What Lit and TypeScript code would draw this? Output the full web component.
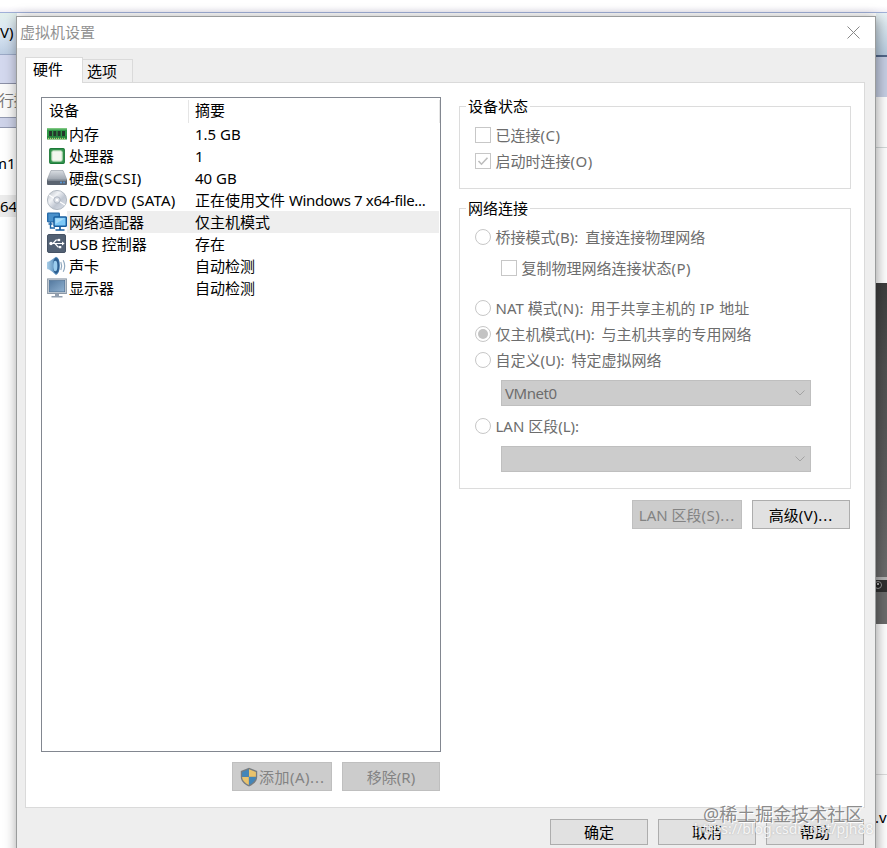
import { LitElement, html, css, svg, nothing } from "lit";
import { customElement, property } from "lit/decorators.js";
import { classMap } from "lit/directives/class-map.js";

const icons: Record<string, unknown> = {
  memory: svg`<rect x="0" y="4" width="20" height="11.5" fill="#2f9a48"/><rect x="0" y="4" width="20" height="1.5" fill="#7cc67f"/>
    <path d="M2 7h3v5H2zM6.3 7h3v5h-3zM10.6 7h3v5h-3zM15 7h3v5h-3z" fill="#24382b"/>
    <path d="M1 14.5h18" stroke="#b9c77a" stroke-width="2" stroke-dasharray="1 1"/><path d="M0 13h20" stroke="#1d7134"/>`,
  cpu: svg`<rect x="2.7" y="2.7" width="14.6" height="14.6" rx="1" fill="#3a9a54" stroke="#1d7a38" stroke-width="1.2"/>
    <rect x="4.8" y="4.8" width="10.4" height="10.4" rx="1.5" fill="#f3f7f0" stroke="#b6d8b5"/>`,
  disk: svg`<defs><linearGradient id="d" x2="0" y2="1"><stop stop-color="#d9dde2"/><stop offset="1" stop-color="#9ba2ac"/></linearGradient></defs>
    <path d="M4 2.500h12l4 9.500H0z" fill="url(#d)" stroke="#9299a3" stroke-width=".6"/><rect x="0" y="11.5" width="20" height="5.500" rx="1" fill="#5b6470"/>
    <path d="M1 12h18" stroke="#a5acb5"/><circle cx="14" cy="14.5" r=".9" fill="#5ba6ee"/><circle cx="17" cy="14.5" r=".9" fill="#4e91d4"/>`,
  disc: svg`<defs><linearGradient id="c" x2="1" y2="1"><stop stop-color="#aeb5be"/><stop offset=".35" stop-color="#f1f3f6"/><stop offset=".6" stop-color="#c0c7d2"/><stop offset="1" stop-color="#dfe4ec"/></linearGradient></defs>
    <circle cx="10" cy="10" r="9.6" fill="url(#c)" stroke="#a5adb8" stroke-width=".8"/><path d="M10 10 2 5M10 10l8 5" stroke="#fff" stroke-width="1.3"/>
    <circle cx="10" cy="10" r="3.2" fill="#dde1e8" stroke="#9ba4b2" stroke-width=".7"/><circle cx="10" cy="10" r="1.3" fill="#fff"/>`,
  network: svg`<rect x=".7" y="1.2" width="11.6" height="8.6" rx=".5" fill="#4a91cb" stroke="#1f66a6" stroke-width="1.3"/><path d="M3.5 10v6H8M1.5 12h4" fill="none" stroke="#1f66a6" stroke-width="1.4"/>
    <rect x="7" y="5" width="12.3" height="9.3" rx=".8" fill="#7cc8f7" stroke="#185d9e" stroke-width="1.5"/><path d="M8.5 6.5h9L8.5 12z" fill="#a9ddfb"/><path d="M13 14.5v3M8.5 18h9" stroke="#185d9e" stroke-width="1.7"/>`,
  usb: svg`<rect x=".5" y=".5" width="18" height="18" rx="1.5" fill="#526174" stroke="#465365"/><path d="M3.5 9.5H16M6 9.5l3-3.5h2.5M8 9.5l3 3.5h2" fill="none" stroke="#fff" stroke-width="1.2"/>
    <circle cx="4" cy="9.5" r="1.7" fill="#fff"/><circle cx="12" cy="6" r="1.3" fill="#fff"/><path d="m15 7.500 2.600 2-2.600 2zM12 11.9h2.300v2.300H12z" fill="#fff"/>`,
  sound: svg`<defs><linearGradient id="s" x2="1"><stop stop-color="#a9cfe9"/><stop offset="1" stop-color="#2f6ca4"/></linearGradient></defs>
    <path d="M0 6.5Q0 5.5 2 5.5 6 3 9 .8 12.8 2 12.8 9.5T9 19Q6 16 2 13.5 0 13.500 0 12.500z" fill="url(#s)"/><ellipse cx="9" cy="9.8" rx="3" ry="7.8" fill="#2c5c8d"/><ellipse cx="8.300" cy="10" rx="2.100" ry="5.300" fill="#9bcdee"/>
    <path d="M13.8 6q1.7 4 0 8M16.2 4.2q3 5.800 0 11.600" fill="none" stroke="#91a9bf" stroke-width="1.2"/>`,
  display: svg`<defs><linearGradient id="m" x2="1" y2="1"><stop stop-color="#54799f"/><stop offset="1" stop-color="#91b2d1"/></linearGradient></defs>
    <rect x=".6" y=".9" width="18.8" height="14.600" fill="#cbd2da" stroke="#8d99a7"/><rect x="2.300" y="2.600" width="15.400" height="11.200" fill="url(#m)" stroke="#4e7195" stroke-width=".7"/><path d="M8 16h4v2H8zM4.500 18h11v1.500h-11z" fill="#929faf"/>`,
  shield: svg`<path d="M10 .8 18.200 4v6c0 4-3.500 7.500-8.200 9.500C5.300 17.500 1.800 14 1.800 10V4z" fill="#777c80"/><path d="M9.800 2.300v7.500H3.100V4.900z" fill="#4386b9"/><path d="M10 2.300v7.500h6.900V4.900z" fill="#e9c36d"/>
    <path d="M3.100 10h6.700v8C6 16 3.300 13.500 3.100 10z" fill="#e9c36d"/><path d="M10 10h6.900c-.3 3.500-3 6-6.900 8z" fill="#4386b9"/>`,
};

const devices: [string, unknown, unknown][] = [
  ["memory", "内存", "1.5 GB"],
  ["cpu", "处理器", "1"],
  ["disk", html`硬盘<span class="wide">(SCSI)</span>`, "40 GB"],
  ["disc", html`<span class="wider">CD/DVD (SATA)</span>`, html`正在使用文件 <span class="tight">Windows 7 x64-file...</span>`],
  ["network", "网络适配器", "仅主机模式"],
  ["usb", "USB 控制器", "存在"],
  ["sound", "声卡", "自动检测"],
  ["display", "显示器", "自动检测"],
];

@customElement("vm-icon")
class VmIcon extends LitElement {
  @property() name = "";
  static styles = css`:host { display: block; width: 20px; height: 20px; flex: none; } svg { display: block; }`;
  render() {
    return html`<svg width="20" height="20" viewBox="0 0 20 20">${icons[this.name]}</svg>`;
  }
}

@customElement("vm-choice")
class VmChoice extends LitElement {
  @property() kind = "radio";
  @property({ type: Boolean }) checked = false;
  static styles = css`
    :host { display: flex; align-items: center; height: 26px; color: #6d6d6d; white-space: pre; }
    .mark { box-sizing: border-box; width: 16px; height: 16px; border: 1px solid #c7c7c7; background: #fff; margin-right: 4.5px; flex: none; display: flex; align-items: center; justify-content: center; }
    .radio { border-radius: 50%; }
    .dot { width: 10px; height: 10px; border-radius: 50%; background: #c3c3c3; }
    svg { display: block; }
  `;
  render() {
    const radio = this.kind === "radio";
    return html`<span class=${classMap({ mark: true, radio })}>
      ${!this.checked ? nothing : radio ? html`<span class="dot"></span>`
        : html`<svg width="14" height="14" viewBox="0 0 14 14"><path d="m2.500 7 3 3.200 6-6.500" fill="none" stroke="#bdbdbd" stroke-width="1.600"/></svg>`}</span><slot></slot>`;
  }
}

@customElement("vm-select")
class VmSelect extends LitElement {
  static styles = css`
    :host { box-sizing: border-box; display: flex; align-items: center; width: 310px; height: 26px; background: #ccc; border: 1px solid #bfbfbf; color: #6d6d6d; padding: 0 4px 0 3px; letter-spacing: -.45px; }
    svg { margin-left: auto; }
  `;
  render() {
    return html`<slot></slot><svg width="12" height="8" viewBox="0 0 12 8"><path d="m1.500 1.500 4.500 4.500 4.500-4.500" fill="none" stroke="#a3a3a3"/></svg>`;
  }
}

@customElement("vm-button")
class VmButton extends LitElement {
  static styles = css`
    :host { box-sizing: border-box; display: flex; align-items: center; justify-content: center; height: 29px; background: #e1e1e1; border: 1px solid #adadad; color: #000; white-space: pre; }
    :host([disabled]) { background: #ccc; border-color: #bfbfbf; color: #838383; }
  `;
  render() {
    return html`<slot></slot>`;
  }
}

@customElement("app-root")
class AppRoot extends LitElement {
  static styles = css`
    * { box-sizing: border-box; }
    :host { display: block; position: relative; width: 887px; height: 848px; overflow: hidden; background: #fff; color: #000;
      font: 15px/22px "Noto Sans", "Noto Sans CJK SC", sans-serif; }
    .desktop { display: flex; flex-direction: column; height: 848px; overflow: hidden; white-space: nowrap; }
    .sky { height: 13px; border-bottom: 1px solid #a0b0d8; background: linear-gradient(#fff 50%, #f3f1f8); }
    .behind { display: flex; justify-content: space-between; flex: 1; }
    .edge { display: flex; flex-direction: column; width: 17px; overflow: hidden; }
    .edge.right { width: 11px; }
    .menu { height: 42px; padding-top: 8px; background: linear-gradient(#e1efec, #dce8f4 45%, #bdcee3); border-bottom: 1px solid #9ba9c6; }
    .lav { height: 29px; background: #d3d8ee; border-bottom: 1px solid #8b90a6; }
    .search { height: 33px; padding-top: 5px; color: #777; background: #fafafa; text-indent: -1px; letter-spacing: -.5px; }
    .strip { height: 11px; background: #ced3e9; border: solid #9299b0; border-width: 1px 0; }
    .item { height: 22px; }
    .first { margin: 24px 0 21px; text-indent: -7px; }
    .sel { background: #ececec; }
    .rmenu { height: 44px; background: linear-gradient(#e8f2f5, #b5cade); border-bottom: 2px solid #526789; }
    .rlav { height: 40px; background: #c5cee3; }
    .rule { height: 51px; border-bottom: 1px solid #d4dada; }
    .photo { margin-top: 135px; height: 341px; background: linear-gradient(#3e3e3e, #505050 25%, #5d5d5d 60%, #6b6b6b 85%); padding-top: 294px; }
    .bar { height: 15px; border-top: 3px solid #b3b3b3; background: #303030; }
    .bar svg { display: block; margin-top: 1px; }
    .file { margin-top: 150px; border-top: 1px solid #ddd; padding-top: 31px; text-indent: -1px; }

    .dialog { position: absolute; left: 16px; top: 16px; width: 860px; height: 850px; border: 1px solid #9a9c9c; background: #eee; box-shadow: 1px 2px 12px rgba(0,0,0,.4); }
    .title { display: flex; justify-content: space-between; align-items: center; height: 31px; padding: 0 15px 0 3px; background: #fff; color: #929292; }
    .title span { margin-top: -2px; }
    .tabs { display: flex; align-items: flex-end; height: 34px; padding-left: 8px; }
    .tab { height: 23px; width: 50px; border: 1px solid #dadada; border-left: 0; border-bottom: 0; padding: 0 0 0 4px; background: #f0f0f0; }
    .tab.on { height: 26px; width: 58px; margin-bottom: -1px; border-left: 1px solid #dadada; padding: 0 0 0 7px; background: #fff; position: relative; z-index: 1; }
    .panel { margin-left: 8px; width: 840px; height: 726px; border: 1px solid #dadada; background: #fff; display: grid; grid-template-columns: 400px 392px; column-gap: 18px; padding: 14px 0 0 15px; }
    .list { height: 655px; border: 1px solid #828790; }
    .head, .row { display: grid; grid-template-columns: 147px 1fr; white-space: nowrap; }
    .head { height: 25px; padding-top: 2px; }
    .head span { height: 23px; line-height: 21px; }
    .head .h1 { padding-left: 7px; border-right: 1px solid #e5e5e5; }
    .head .h2 { padding-left: 6px; border-right: 1px solid #e5e5e5; }
    .row { height: 22px; padding-right: 1px; }
    .dev { display: flex; align-items: center; padding-left: 5px; }
    .name { flex: 1; height: 22px; padding-left: 2px; }
    .sum { padding-left: 6px; overflow: hidden; }
    .wide { letter-spacing: .45px; } .wider { letter-spacing: .25px; } .tight { letter-spacing: -.35px; }
    .dots { letter-spacing: 1px; }
    .colon { margin-right: 3px; }
    .active .name, .active .sum { background: #eee; }
    .actions { display: flex; justify-content: flex-end; gap: 10px; margin: 10px 1px 0 0; }
    .w98 { width: 98px; } .w100 { width: 100px; } .w110 { width: 110px; }
    fieldset { margin: 0; min-width: 0; border: 1px solid #dcdcdc; padding: 0 0 0 15px; }
    legend { margin-left: -9px; padding: 0 2px; height: 20px; line-height: 20px; }
    .status { height: 93px; padding-top: 6px; }
    .net { height: 291px; margin-top: 9px; padding-top: 6px; }
    .nest { margin-left: 26px; }
    .g5 { margin-top: 5px; } .g14 { margin-top: 14px; } .g7 { margin-top: 7px; }
    .rightcol { padding-top: 1px; margin-top: -2px; }
    .rightcol .actions { margin-top: 11px; }
    .foot { display: flex; justify-content: flex-end; gap: 10px; padding: 11px 11px 0 0; }
    .foot vm-button { height: 26px; }
    .mark { position: absolute; color: rgba(110,110,110,.8); font-size: 18px; line-height: 24px; white-space: nowrap; }
    .m1 { left: 703px; top: 802px; text-shadow: 1px 1px #fff; }
    .m2 { left: 694px; top: 817px; font-size: 14px; color: rgba(255,255,255,.85); text-shadow: 0 0 2px rgba(120,120,120,.45); }
  `;

  render() {
    const dots = html`<span class="dots">...</span>`;
    const colon = html`<span class="colon">:</span>`;
    return html`
      <div class="desktop">
        <div class="sky"></div>
        <div class="behind">
          <div class="edge">
            <div class="menu">V)</div><div class="lav"></div><div class="search">行搜</div><div class="strip"></div>
            <div class="item first">m1</div><div class="item sel">64</div>
          </div>
          <div class="edge right">
            <div class="rmenu"></div><div class="rlav"></div><div class="rule"></div>
            <div class="photo"><div class="bar"><svg width="11" height="11" viewBox="0 0 11 11"><circle cx="2" cy="4" r="3.500" fill="#222" stroke="#999"/><circle cx="2" cy="3" r="1" fill="#ddd"/></svg></div></div>
            <div class="file">.vm</div>
          </div>
        </div>
      </div>
      <div class="dialog">
        <div class="title"><span>虚拟机设置</span><svg width="13" height="13" viewBox="0 0 13 13"><path d="m.5.5 12 12m0-12-12 12" stroke="#888" fill="none"/></svg></div>
        <div class="tabs"><div class="tab on">硬件</div><div class="tab">选项</div></div>
        <div class="panel">
          <div>
            <div class="list">
              <div class="head"><span class="h1">设备</span><span class="h2">摘要</span></div>
              ${devices.map(([icon, name, sum]) => html`<div class=${classMap({ row: true, active: icon === "network" })}>
                <div class="dev"><vm-icon name=${icon}></vm-icon><span class="name">${name}</span></div><span class="sum">${sum}</span></div>`)}
            </div>
            <div class="actions">
              <vm-button class="w100" disabled><vm-icon name="shield"></vm-icon><span class="wide">添加(A)${dots}</span></vm-button>
              <vm-button class="w98" disabled>移除(R)</vm-button>
            </div>
          </div>
          <div class="rightcol">
            <fieldset class="status"><legend>设备状态</legend>
              <vm-choice kind="check"><span>已连接<span class="wide">(C)</span></span></vm-choice>
              <vm-choice kind="check" checked><span>启动时连接<span class="wide">(O)</span></span></vm-choice>
            </fieldset>
            <fieldset class="net"><legend>网络连接</legend>
              <vm-choice><span>桥接模式(B)${colon} 直接连接物理网络</span></vm-choice>
              <vm-choice kind="check" class="nest g5"><span>复制物理网络连接状态<span class="wide">(P)</span></span></vm-choice>
              <vm-choice class="g14"><span>NAT 模式<span class="wide">(N)</span>${colon} 用于共享主机的<span class="wide"> IP </span>地址</span></vm-choice>
              <vm-choice checked><span>仅主机模式(H)${colon} 与主机共享的专用网络</span></vm-choice>
              <vm-choice><span>自定义(U)${colon} 特定虚拟网络</span></vm-choice>
              <vm-select class="nest g7">VMnet0</vm-select>
              <vm-choice class="g7">LAN 区段(L):</vm-choice>
              <vm-select class="nest g7"></vm-select>
            </fieldset>
            <div class="actions"><vm-button class="w110" disabled><span>LAN 区段<span class="wide">(S)</span>${dots}</span></vm-button><vm-button class="w98"><span>高级<span class="wide">(V)</span>${dots}</span></vm-button></div>
          </div>
        </div>
        <div class="foot"><vm-button class="w98">确定</vm-button><vm-button class="w98">取消</vm-button><vm-button class="w98">帮助</vm-button></div>
      </div>
      <div class="mark m2">https://blog.csdn.net/pjh88</div>
      <div class="mark m1">@稀土掘金技术社区</div>
    `;
  }
}
